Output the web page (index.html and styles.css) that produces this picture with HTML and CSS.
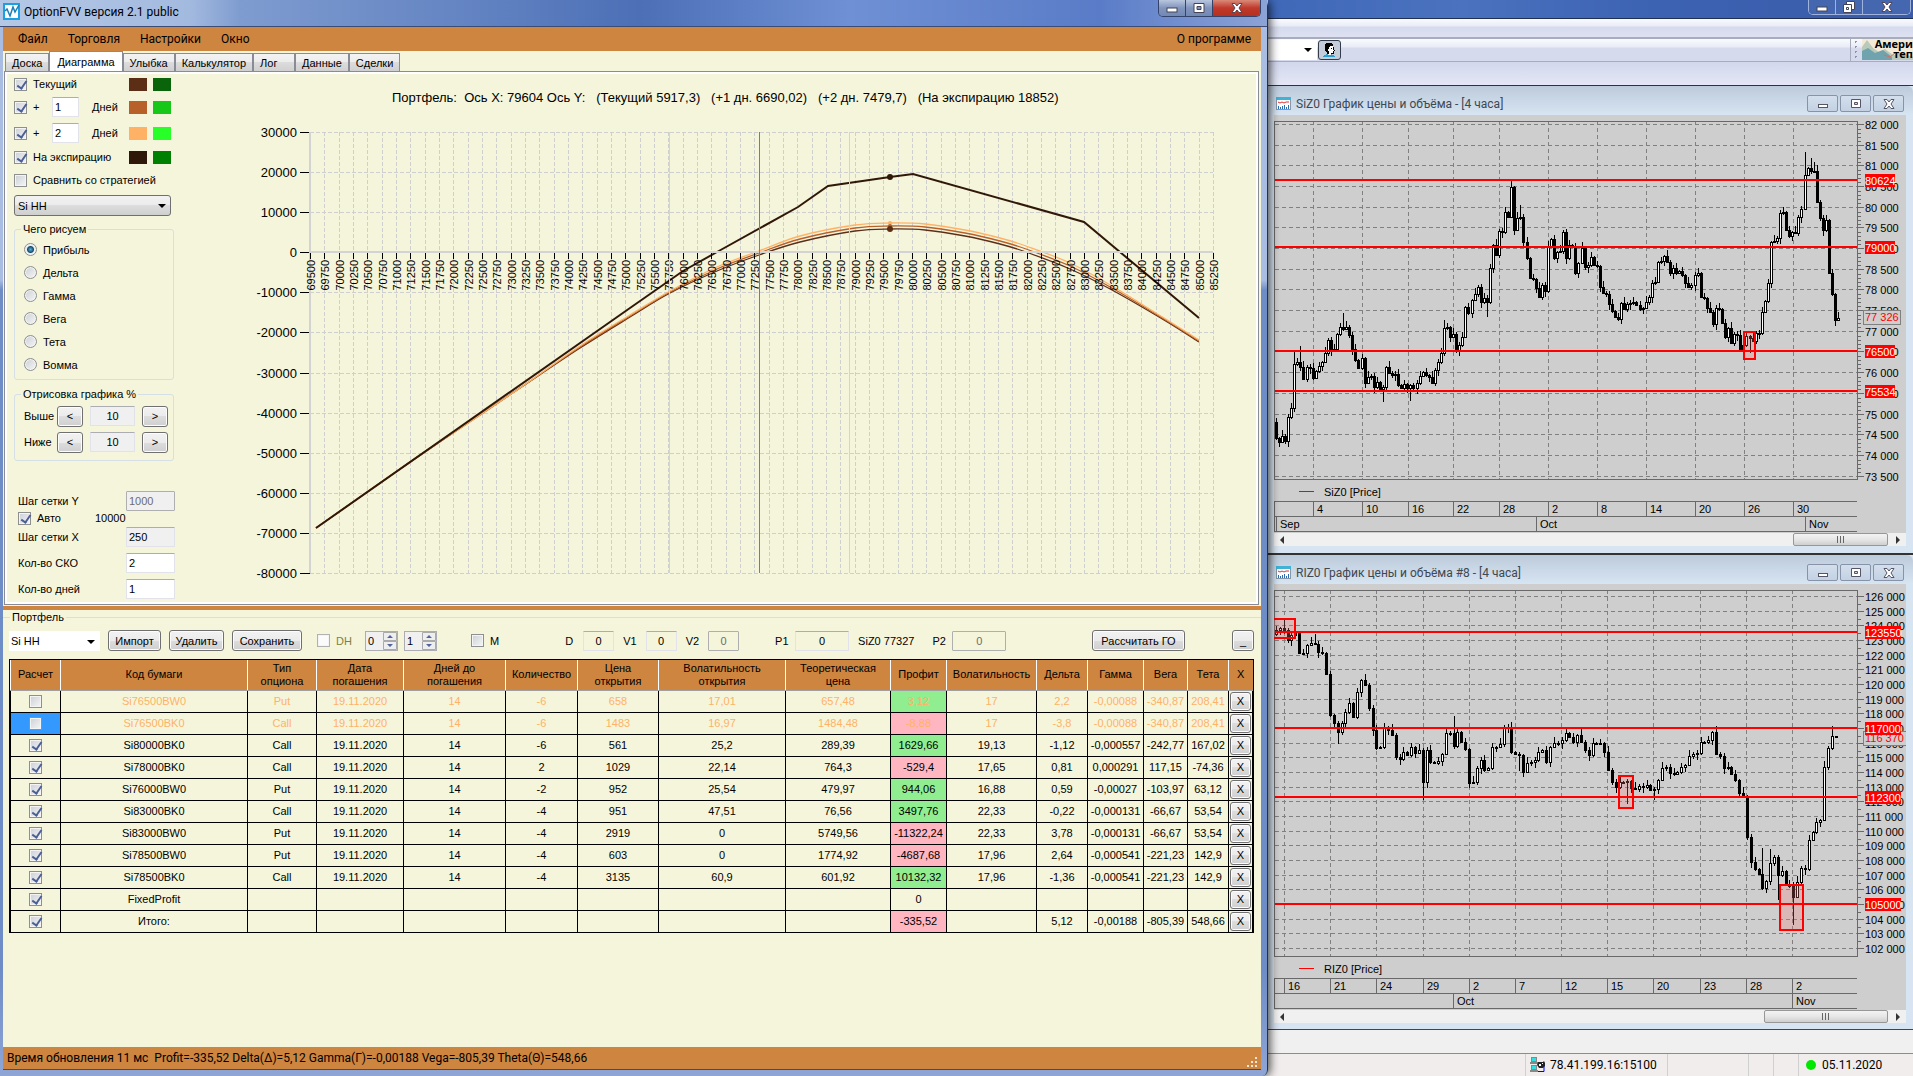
FILE: index.html
```html
<!DOCTYPE html>
<html lang="ru">
<head>
    <meta charset="UTF-8">
    <meta name="viewport" content="width=device-width, initial-scale=1.0">
    <title>OptionFVV версия 2.1 public</title>
    <link rel="stylesheet" href="styles.css">
</head>
<body>
    <main class="window">
        <header class="titlebar">
            <svg class="app-icon" width="17" height="17" viewBox="0 0 17 17">
                <rect width="17" height="17" fill="#1ba1e2"/>
                <rect x="2" y="2" width="13" height="13" fill="#fff"/>
                <path d="M2 8l2-2 3 7 3-9 2 5 4-7" fill="none" stroke="#1b7fb8" stroke-width="1.5"/>
            </svg>
            <h1>OptionFVV версия 2.1 public</h1>
            <div class="window-buttons">
                <button aria-label="Свернуть"><svg width="12" height="10" viewBox="0 0 12 10"><rect x="1" y="5" width="10" height="4" fill="#fff" stroke="#445"/></svg></button>
                <button aria-label="Развернуть"><svg width="12" height="10" viewBox="0 0 12 10"><path d="M1 .5h10v9H1zM4 3.500h4v3H4z" fill="#fff" fill-rule="evenodd" stroke="#445"/></svg></button>
                <button class="close" aria-label="Закрыть"><svg width="12" height="10" viewBox="0 0 12 10"><path d="M1 .5h3l2 2.500 2-2.500h3L8 5l3 4.500H8L6 7 4 9.500H1L4 5z" fill="#fff" stroke="#545"/></svg></button>
            </div>
        </header>

        <nav class="menu">
            <a href="#">Файл</a>
            <a href="#">Торговля</a>
            <a href="#">Настройки</a>
            <a href="#">Окно</a>
            <a href="#" class="about">О программе</a>
        </nav>

        <div class="tabs">
            <button>Доска</button>
            <button class="active">Диаграмма</button>
            <button>Улыбка</button>
            <button>Калькулятор</button>
            <button class="tab-log">Лог</button>
            <button>Данные</button>
            <button>Сделки</button>
        </div>

        <div class="client-area">
            <section class="page">
                <div class="sidebar">
                    <div class="line-row first">
                        <input type="checkbox" id="cur" checked>
                        <label for="cur" class="wide">Текущий</label>
                        <i class="swatch brown"></i><i class="swatch green"></i>
                    </div>
                    <div class="line-row">
                        <input type="checkbox" id="plus1" checked>
                        <label for="plus1">+</label>
                        <input type="text" value="1" aria-label="Дней 1">
                        <span>Дней</span>
                        <i class="swatch sienna"></i><i class="swatch lime"></i>
                    </div>
                    <div class="line-row">
                        <input type="checkbox" id="plus2" checked>
                        <label for="plus2">+</label>
                        <input type="text" value="2" aria-label="Дней 2">
                        <span>Дней</span>
                        <i class="swatch sand"></i><i class="swatch bright"></i>
                    </div>
                    <div class="line-row short">
                        <input type="checkbox" id="exp" checked>
                        <label for="exp" class="wide">На экспирацию</label>
                        <i class="swatch dark"></i><i class="swatch deep"></i>
                    </div>
                    <div class="compare-row">
                        <input type="checkbox" id="compare">
                        <label for="compare">Сравнить со стратегией</label>
                    </div>
                    <div class="select grey">
                        <select aria-label="Стратегия"><option>Si HH</option></select>
                    </div>

                    <fieldset class="draw">
                        <legend>Чего рисуем</legend>
                        <label><input type="radio" name="draw" checked>Прибыль</label>
                        <label><input type="radio" name="draw">Дельта</label>
                        <label><input type="radio" name="draw">Гамма</label>
                        <label><input type="radio" name="draw">Вега</label>
                        <label><input type="radio" name="draw">Тета</label>
                        <label><input type="radio" name="draw">Вомма</label>
                    </fieldset>

                    <fieldset class="range">
                        <legend>Отрисовка графика %</legend>
                        <div class="range-row">
                            <label for="above">Выше</label>
                            <button class="btn">&lt;</button>
                            <input type="text" id="above" value="10" readonly>
                            <button class="btn">&gt;</button>
                        </div>
                        <div class="range-row">
                            <label for="below">Ниже</label>
                            <button class="btn">&lt;</button>
                            <input type="text" id="below" value="10" readonly>
                            <button class="btn">&gt;</button>
                        </div>
                    </fieldset>

                    <div class="steps">
                        <div class="step-row"><label for="stepY">Шаг сетки Y</label><input type="text" id="stepY" value="1000" disabled></div>
                        <div class="auto-row"><input type="checkbox" id="auto" checked><label for="auto">Авто</label><span>10000</span></div>
                        <div class="step-row"><label for="stepX">Шаг сетки X</label><input type="text" id="stepX" value="250" readonly></div>
                        <div class="step-row"><label for="sko">Кол-во СКО</label><input type="text" id="sko" value="2"></div>
                        <div class="step-row"><label for="days">Кол-во дней</label><input type="text" id="days" value="1"></div>
                    </div>
                </div>
                <svg class="profit-chart" id="profitChart" viewBox="180 74 1076 528"></svg>
            </section>

            <div class="splitter"></div>

            <fieldset class="portfolio">
                <legend>Портфель</legend>
                <div class="toolbar">
                    <div class="select white"><select aria-label="Портфель"><option>Si HH</option></select></div>
                    <button class="btn import">Импорт</button>
                    <button class="btn remove">Удалить</button>
                    <button class="btn save">Сохранить</button>
                    <div class="hedge">
                        <input type="checkbox" id="dh" disabled>
                        <label for="dh">DH</label>
                        <div class="spin">
                            <input type="text" value="0" aria-label="DH от">
                            <svg width="14" height="18" viewBox="0 0 14 18"><path d="M.5.500h13v8H.5zM.5 9.500h13v8H.5z" fill="#eee" stroke="#aaa"/><path d="M4 6l3-3 3 3zM4 12l3 3 3-3z" fill="#5264a0"/></svg>
                        </div>
                        <div class="spin">
                            <input type="text" value="1" aria-label="DH до">
                            <svg width="14" height="18" viewBox="0 0 14 18"><path d="M.5.500h13v8H.5zM.5 9.500h13v8H.5z" fill="#eee" stroke="#aaa"/><path d="M4 6l3-3 3 3zM4 12l3 3 3-3z" fill="#5264a0"/></svg>
                        </div>
                    </div>
                    <div class="manual">
                        <input type="checkbox" id="m">
                        <label for="m">M</label>
                    </div>
                    <div class="params">
                        <label for="pd">D</label><input type="text" id="pd" value="0">
                        <label for="v1">V1</label><input type="text" id="v1" value="0">
                        <label for="v2">V2</label><input type="text" id="v2" value="0" disabled>
                    </div>
                    <div class="params prices">
                        <label for="p1">P1</label><input type="text" id="p1" value="0">
                        <span>SiZ0 77327</span>
                        <label for="p2">P2</label><input type="text" id="p2" value="0" disabled>
                    </div>
                    <button class="btn margin">Рассчитать ГО</button>
                    <button class="btn fold">_</button>
                </div>
                <div class="grid-box">
                    <table class="positions">
                        <colgroup>
                            <col class="c-use"><col class="c-code"><col class="c-type"><col class="c-date"><col class="c-days">
                            <col class="c-qty"><col class="c-open"><col class="c-vopen"><col class="c-theor"><col class="c-profit">
                            <col class="c-vol"><col class="c-delta"><col class="c-gamma"><col class="c-vega"><col class="c-theta"><col class="c-x">
                        </colgroup>
                        <thead>
                            <tr>
                                <th>Расчет</th>
                                <th>Код бумаги</th>
                                <th>Тип<br>опциона</th>
                                <th>Дата<br>погашения</th>
                                <th>Дней до<br>погашения</th>
                                <th>Количество</th>
                                <th>Цена<br>открытия</th>
                                <th>Волатильность<br>открытия</th>
                                <th>Теоретическая<br>цена</th>
                                <th>Профит</th>
                                <th>Волатильность</th>
                                <th>Дельта</th>
                                <th>Гамма</th>
                                <th>Вега</th>
                                <th>Тета</th>
                                <th>X</th>
                            </tr>
                        </thead>
                        <tbody id="positions"></tbody>
                    </table>
                </div>
            </fieldset>
        </div>

        <footer class="status">
            <span>Время обновления 11 мс&nbsp; Profit=-335,52 Delta(Δ)=5,12 Gamma(Γ)=-0,00188 Vega=-805,39 Theta(Θ)=548,66</span>
            <svg width="12" height="12" viewBox="0 0 12 12"><path d="M8 0h2v2H8zM4 4h2v2H4zM8 4h2v2H8zM0 8h2v2H0zM4 8h2v2H4zM8 8h2v2H8z" fill="#f4e6d4"/></svg>
        </footer>
    </main>

    <aside class="quik">
        <div class="quik-title">
            <div class="window-buttons">
                <button aria-label="Свернуть"><svg width="12" height="10" viewBox="0 0 12 10"><rect x="1" y="5" width="10" height="4" fill="#fff" stroke="#445"/></svg></button>
                <button aria-label="Восстановить"><svg width="12" height="12" viewBox="0 0 12 12"><path d="M3.500.500h8v8h-8z" fill="#fff" stroke="#445"/><path d="M.5 3.500h8v8h-8zM3.500 6.500h2v2h-2z" fill="#fff" fill-rule="evenodd" stroke="#445"/></svg></button>
                <button class="wide" aria-label="Закрыть"><svg width="12" height="10" viewBox="0 0 12 10"><path d="M1 .5h3l2 2.500 2-2.500h3L8 5l3 4.500H8L6 7 4 9.500H1L4 5z" fill="#fff" stroke="#545"/></svg></button>
            </div>
        </div>
        <div class="quik-menu"></div>
        <div class="quik-toolbar">
            <div class="combo"><select aria-label="Клиент"><option></option></select></div>
            <button class="client" aria-label="Клиент">
                <svg width="13" height="14" viewBox="0 0 13 14">
                    <path d="M5 2h5v2h1v3h1v1h-1v3H8v2H5V9H4V6h1z" fill="#fff"/>
                    <path d="M10 4h1v3h1v1h-1v3H8v-1h2V8h1V7h-1zM8 5h1v1H8z" fill="#000"/>
                    <path d="M3 0h6v1h1v2H7v1H6v2H5v2h1v3H5v1H4V9H3V8H2V5h0V1h1z" fill="#000"/>
                    <path d="M3 11h2v1h3v-1h1v1h2v1h1v1H0v-1h1v-1h2z" fill="#2f9fd0"/>
                </svg>
            </button>
            <div class="banner">
                <svg viewBox="0 0 52 21" width="52" height="21">
                    <rect width="52" height="21" fill="#f3ead8"/>
                    <path d="M0 8l5-7 6 8 6 4 6-3 8 6 8-2 13 4v3H0z" fill="#b9c9ba"/>
                    <path d="M0 12l6-3 7 5 8-3 9 7v3H0z" fill="#6fa3ae"/>
                    <path d="M22 16l6 2 5-4" fill="none" stroke="#c8766a"/>
                </svg>
                <div class="banner-text"><span>Амери</span><span>теп</span></div>
            </div>
        </div>
        <div class="quik-gap"></div>

        <section class="child">
            <header>
                <svg width="15" height="13" viewBox="0 0 15 13"><rect x=".5" y=".5" width="14" height="12" fill="#fff" stroke="#8a98a6"/><rect width="15" height="3" fill="#3fb2d6"/><path d="M2 5l2 1 2-1 2 1 2-1 3 0" fill="none" stroke="#d33"/><path d="M2.500 12V9M4.500 12v-2M6.500 12V9M8.500 12V8M10.500 12v-2M12.500 12V8" stroke="#2a6fb5"/></svg>
                <h2>SiZ0 График цены и объёма - [4 часа]</h2>
                <div class="child-buttons">
                    <button aria-label="Свернуть"><svg width="12" height="10" viewBox="0 0 12 10"><rect x="1.500" y="5.500" width="9" height="3" fill="#fff" stroke="#556"/></svg></button>
                    <button aria-label="Развернуть"><svg width="12" height="10" viewBox="0 0 12 10"><path d="M1.500.500h9v8h-9zM4.500 3.500h3v2h-3z" fill="#fff" fill-rule="evenodd" stroke="#556"/></svg></button>
                    <button aria-label="Закрыть"><svg width="12" height="10" viewBox="0 0 12 10"><path d="M1 .5h3l2 2.500 2-2.500h3L8 5l3 4.500H8L6 7 4 9.500H1L4 5z" fill="#fff" stroke="#556"/></svg></button>
                </div>
            </header>
            <svg class="price-chart" id="siChart" viewBox="0 0 632 418"></svg>
            <div class="scroll"><i class="left"></i><b></b><i class="right"></i></div>
        </section>

        <section class="child second">
            <header>
                <svg width="15" height="13" viewBox="0 0 15 13"><rect x=".5" y=".5" width="14" height="12" fill="#fff" stroke="#8a98a6"/><rect width="15" height="3" fill="#3fb2d6"/><path d="M2 5l2 1 2-1 2 1 2-1 3 0" fill="none" stroke="#d33"/><path d="M2.500 12V9M4.500 12v-2M6.500 12V9M8.500 12V8M10.500 12v-2M12.500 12V8" stroke="#2a6fb5"/></svg>
                <h2>RIZ0 График цены и объёма #8 - [4 часа]</h2>
                <div class="child-buttons">
                    <button aria-label="Свернуть"><svg width="12" height="10" viewBox="0 0 12 10"><rect x="1.500" y="5.500" width="9" height="3" fill="#fff" stroke="#556"/></svg></button>
                    <button aria-label="Развернуть"><svg width="12" height="10" viewBox="0 0 12 10"><path d="M1.500.500h9v8h-9zM4.500 3.500h3v2h-3z" fill="#fff" fill-rule="evenodd" stroke="#556"/></svg></button>
                    <button aria-label="Закрыть"><svg width="12" height="10" viewBox="0 0 12 10"><path d="M1 .5h3l2 2.500 2-2.500h3L8 5l3 4.500H8L6 7 4 9.500H1L4 5z" fill="#fff" stroke="#556"/></svg></button>
                </div>
            </header>
            <svg class="price-chart" id="riChart" viewBox="0 0 632 426"></svg>
            <div class="scroll long"><i class="left"></i><b></b><i class="right"></i></div>
        </section>

        <div class="quik-tabs"></div>
        <footer class="quik-status">
            <span class="server">
                <svg width="16" height="16" viewBox="0 0 16 16"><path d="M1 0h6v5H1zM0 5h8v2H0zM1 8h6v5H1zM0 13h8v2H0z" fill="#888"/><path d="M2 1h4v3H2zM2 9h4v3H2z" fill="#2fe0e0"/><path d="M8 14.500h6V9" fill="none" stroke="#00f"/><path d="M8 5h5l1-1 1 2v3l-2 2H9L7 8z" fill="#222"/><path d="M9 7h2v2H9zM12 6h1v1h-1z" fill="#fff"/></svg>
                78.41.199.16:15100
            </span>
            <span class="cell"></span>
            <span class="cell small"></span>
            <span class="cell small"></span>
            <span class="date"><i></i>05.11.2020</span>
        </footer>
    </aside>

    <script src="script.js"></script>
</body>
</html>
```
FILE: styles.css
```css
* {
    margin: 0;
    padding: 0;
    box-sizing: border-box;
}

body {
    font-family: 'Liberation Sans', Arial, sans-serif;
    font-size: 11px;
    line-height: 14px;
    color: #000;
    min-height: 100vh;
    display: grid;
    grid-template-columns: minmax(0, 1268fr) minmax(0, 645fr);
    background: #f0f0f0;
}

button,
input,
select {
    font: inherit;
    color: inherit;
}

button {
    cursor: pointer;
}

a {
    color: inherit;
    text-decoration: none;
}

svg {
    display: block;
}

/* Main window */
.window {
    position: relative;
    z-index: 2;
    display: flex;
    flex-direction: column;
    min-height: 100vh;
    padding: 0 6px 6px 3px;
    background: linear-gradient(180deg, #a9bde2 0, #a9bde2 280px, #6e8cc6 290px, #6e8cc6 90%, #8ea5d6 100%);
    border-right: 1px solid #26324a;
    border-radius: 0 6px 6px 0;
    box-shadow: 2px 0 10px rgba(0, 0, 0, 0.7);
}

.titlebar {
    display: flex;
    align-items: center;
    height: 27px;
    margin: 0 -6px 0 -3px;
    padding: 0 6px 3px 3px;
    background: linear-gradient(90deg, #b4c8e6 0, #a3badf 190px, #7f9cd0 240px, #5f80c0 500px, #4c6fb6 640px, #6f90d4 850px, #5a7cc8 1100px, #8ca3d6 100%);
    border-bottom: 1px solid #3c4c74;
}

.app-icon {
    margin-right: 4px;
}

.titlebar h1 {
    font: 12px/16px Roboto, sans-serif;
    flex: 1;
}

.window-buttons {
    display: flex;
    align-self: flex-start;
    border: 1px solid #33436b;
    border-top: 0;
    border-radius: 0 0 5px 5px;
    overflow: hidden;
}

.window-buttons button {
    display: flex;
    align-items: center;
    justify-content: center;
    width: 27px;
    height: 16px;
    border: 0;
    border-right: 1px solid #33436b;
    background: linear-gradient(#b9c6de, #8194bd 50%, #7289b5);
}

.window-buttons .close {
    width: 47px;
    border-right: 0;
    background: linear-gradient(#d98a78, #c0392b 50%, #b5301f);
}

.menu {
    display: flex;
    align-items: center;
    gap: 20px;
    height: 24px;
    padding: 0 10px 0 15px;
    background: #cd853f;
    font: 12px/16px Roboto, sans-serif;
}

.menu .about {
    margin-left: auto;
}

.tabs {
    display: flex;
    align-items: flex-end;
    height: 20px;
    padding-left: 2px;
    background: #f5f5dc;
}

.tabs button {
    height: 18px;
    padding: 0 6px;
    border: 1px solid #898c95;
    border-bottom: 0;
    background: linear-gradient(#f3f3f3, #ececec 50%, #dcdcdc 50%, #d0d0d0);
}

.tabs .active {
    height: 20px;
    padding: 0 7px;
    background: #fff;
}

.tabs .tab-log {
    width: 42px;
    text-align: left;
}

.client-area {
    flex: 1;
    display: flex;
    flex-direction: column;
    background: #f5f5dc;
}

.page {
    display: flex;
    border: 1px solid #898c95;
    margin: 0 2px 0 1px;
    box-shadow: inset 0 0 0 2px #fff;
    padding: 2px;
}

.sidebar {
    flex: 0 0 173px;
    padding-left: 7px;
}

.profit-chart {
    flex: 1;
    min-width: 0;
}

/* Controls */
input[type="checkbox"],
input[type="radio"] {
    appearance: none;
    flex: none;
    width: 13px;
    height: 13px;
    border: 1px solid #8e8f8f;
    background: linear-gradient(135deg, #cbcfd5, #f6f6f6);
    box-shadow: inset 0 0 0 1px #f4f4f4;
}

input[type="checkbox"]:checked::after {
    content: '';
    display: block;
    width: 4px;
    height: 8px;
    margin: 0 0 0 4px;
    border: solid #4b5f97;
    border-width: 0 2px 2px 0;
    transform: rotate(35deg);
}

input[type="checkbox"]:disabled {
    border-color: #b1b1b1;
    background: #fbfbfb;
}

input[type="radio"] {
    border-radius: 50%;
}

input[type="radio"]:checked {
    background: radial-gradient(circle, #4fb5dc 0, #1b4a6b 3px, #e8eef2 4px);
}

input[type="text"] {
    width: 100%;
    height: 20px;
    padding: 0 2px;
    border: 1px solid #e2e3ea;
    border-top-color: #abadb3;
    border-radius: 1px;
    background: #fff;
}

input[type="text"]:read-only {
    background: #f0f0f0;
}

input[type="text"]:disabled {
    border-color: #afafaf;
    background: #f0f0f0;
    color: #6d6d6d;
}

.btn {
    height: 21px;
    border: 1px solid #707070;
    border-radius: 3px;
    background: linear-gradient(#f2f2f2, #ebebeb 50%, #ddd 50%, #cfcfcf);
    box-shadow: inset 0 0 0 1px #fcfcfc;
}

.select {
    position: relative;
}

.select select {
    appearance: none;
    display: block;
    width: 100%;
    height: 21px;
    padding: 0 3px;
    border: 1px solid #707070;
    border-radius: 3px;
    background: linear-gradient(#f2f2f2, #ebebeb 50%, #ddd 50%, #cfcfcf);
}

.select::after,
.combo::after {
    content: '';
    position: absolute;
    right: 5px;
    top: 9px;
    border: 4px solid transparent;
    border-top-color: #000;
    border-bottom: 0;
}

.select.white select {
    height: 20px;
    padding: 0 1px;
    border-color: #fff;
    border-radius: 0;
    background: #fff;
}

/* Chart settings */
.line-row {
    display: grid;
    grid-template-columns: 19px 19px 40px 37px 24px 18px;
    align-items: center;
    height: 26px;
}

.line-row.first {
    height: 20px;
}

.line-row.short {
    height: 22px;
}

.line-row .wide {
    grid-column: 2 / 5;
}

.line-row input[type="text"] {
    width: 27px;
}

.swatch {
    width: 18px;
    height: 13px;
}

.brown { background: #5c2e16; }
.green { background: #0a640a; }
.sienna { background: #b8602a; }
.lime { background: #18c818; }
.sand { background: #ffb266; }
.bright { background: #28ff28; }
.dark { background: #301808; }
.deep { background: #008000; }

.compare-row {
    display: flex;
    align-items: center;
    gap: 6px;
    height: 24px;
    margin-bottom: 3px;
}

.sidebar .select {
    width: 157px;
}

fieldset {
    border: 1px solid #d5dfe5;
    border-radius: 3px;
}

legend {
    margin-left: 6px;
    padding: 0 2px;
}

.draw {
    width: 160px;
    margin-top: 6px;
    padding: 2px 0 3px;
}

.draw label {
    display: flex;
    align-items: center;
    gap: 6px;
    height: 23px;
    padding-left: 9px;
}

.range {
    width: 160px;
    margin-top: 7px;
    padding: 2px 0 5px;
}

.range-row {
    display: grid;
    grid-template-columns: 26px 26px 45px 26px;
    gap: 7px;
    align-items: center;
    height: 26px;
    padding-left: 9px;
}

.range-row input[type="text"] {
    text-align: center;
}

.steps {
    margin-top: 27px;
    padding-left: 4px;
}

.step-row {
    display: grid;
    grid-template-columns: 108px 49px;
    align-items: center;
    height: 26px;
}

.auto-row {
    display: flex;
    align-items: center;
    gap: 6px;
    height: 14px;
    margin: -3px 0 -1px;
}

.auto-row span {
    margin-left: 28px;
}

.splitter {
    height: 5px;
    border-top: 1px solid #f5f5dc;
    background: #cd853f;
}

/* Portfolio */
.portfolio {
    flex: 1;
    display: flex;
    flex-direction: column;
    min-width: 0;
    border-width: 1px 0 0;
    border-radius: 0;
    padding: 5px 7px 0 6px;
}

.portfolio legend {
    margin-left: 1px;
}

.toolbar {
    display: flex;
    align-items: center;
    gap: 8px;
    height: 23px;
    margin-bottom: 7px;
}

.toolbar .white {
    width: 91px;
}

.import { width: 53px; }
.remove { width: 55px; }
.save { width: 70px; }

.hedge,
.manual,
.params {
    display: flex;
    align-items: center;
    gap: 6px;
}

.hedge {
    margin-left: 7px;
    color: #808040;
}

.hedge label {
    width: 23px;
}

.spin {
    display: flex;
    width: 33px;
    height: 20px;
    border: 1px solid #abadb3;
    background: #f0f0f0;
    color: #000;
}

.spin input[type="text"] {
    height: 18px;
    border: 0;
    background: #f0f0f0;
}

.spin svg {
    flex: none;
}

.manual {
    margin-left: 26px;
}

.params {
    gap: 9px;
    margin-left: 58px;
}

.params input[type="text"] {
    width: 31px;
    text-align: center;
    background: #f5f5dc;
}

.params label {
    min-width: 9px;
}

.prices {
    gap: 6px;
    margin-left: 28px;
}

.prices input[type="text"] {
    width: 54px;
}

.prices span {
    margin: 0 12px 0 3px;
}

.prices label {
    min-width: 14px;
}

.margin {
    width: 93px;
    margin-left: auto;
}

.fold {
    width: 22px;
    margin-left: 39px;
}

.grid-box {
    flex: 1;
    border: 1px solid #000;
    border-bottom: 0;
}

.positions {
    width: 100%;
    table-layout: fixed;
    border-collapse: collapse;
}

.c-use { width: 50px; }
.c-code { width: auto; }
.c-type { width: 69px; }
.c-date { width: 87px; }
.c-days { width: 102px; }
.c-qty { width: 72px; }
.c-open { width: 81px; }
.c-vopen { width: 127px; }
.c-theor { width: 105px; }
.c-profit { width: 56px; }
.c-vol { width: 90px; }
.c-delta { width: 51px; }
.c-gamma { width: 56px; }
.c-vega { width: 44px; }
.c-theta { width: 41px; }
.c-x { width: 24px; }

.positions th {
    height: 30px;
    background: #cd853f;
    border-left: 1px solid #fff;
    border-bottom: 1px solid #a0a0a0;
    font-weight: normal;
    line-height: 13px;
}

.positions td {
    height: 22px;
    border: 1px solid #000;
    text-align: center;
    white-space: nowrap;
}

.positions td input {
    display: block;
    margin: 0 auto;
}

.positions td .btn {
    display: block;
    width: 21px;
    height: 19px;
    margin: 0 auto;
}

.positions .off td {
    color: #ffb266;
}

.positions .off .btn {
    color: #000;
}

.positions .selected {
    background: #3399ff;
}

.positions .gain {
    background: #90ee90;
}

.positions .loss {
    background: #ffb6c1;
}

.status {
    display: flex;
    align-items: center;
    justify-content: space-between;
    height: 23px;
    padding: 0 2px 0 4px;
    background: #cd853f;
    border-bottom: 1px solid #3c4c74;
    font: 12px/16px Roboto, sans-serif;
}

.status svg {
    align-self: flex-end;
}

/* Trading terminal behind */
.quik {
    display: flex;
    flex-direction: column;
    min-height: 100vh;
    overflow: hidden;
}

.quik-title {
    display: flex;
    justify-content: flex-end;
    height: 19px;
    padding-right: 2px;
    background: linear-gradient(90deg, #3f68b8, #4a72be 30%, #3c62b2 60%, #3a5ca8);
    border-bottom: 1px solid #1f2f55;
}

.quik-title .window-buttons {
    height: 15px;
    border-color: #9fb3dc;
}

.quik-title .window-buttons button {
    height: 14px;
    border-color: #9fb3dc;
    background: #4567b0;
}

.quik-title .window-buttons .wide {
    width: 47px;
    border-right: 0;
}

.quik-menu {
    height: 20px;
    border-bottom: 2px solid #a8adbd;
    background: linear-gradient(#fafbfe, #e9ecf7 7px, #d5daed 8px, #dde1f2);
}

.quik-toolbar {
    display: flex;
    align-items: center;
    height: 23px;
    border-bottom: 1px solid #a8adbd;
    background: linear-gradient(#fafbfe, #e9ecf7 8px, #d5daed 9px, #d5daed);
}

.combo {
    position: relative;
    width: 49px;
}

.combo::after {
    top: 8px;
}

.combo select {
    appearance: none;
    display: block;
    width: 100%;
    height: 20px;
    border: 0;
    background: #fff;
}

.client {
    display: flex;
    align-items: center;
    justify-content: center;
    width: 23px;
    height: 20px;
    margin-left: 1px;
    border: 1px solid #333b4c;
    border-radius: 3px;
    background: #c5cddb;
}

.banner {
    display: flex;
    position: relative;
    width: 63px;
    height: 22px;
    margin-left: auto;
    padding-left: 11px;
    border-left: 1px solid #a8adbd;
    background: radial-gradient(circle, #8a93ad 1px, transparent 1px) 2px 0 / 5px 5px repeat-y;
    overflow: hidden;
}

.banner svg {
    flex: none;
}

.banner-text {
    position: absolute;
    right: 0;
    top: 0;
    font: bold 11px/10px 'Open Sans', sans-serif;
    text-align: right;
}

.banner-text span {
    display: block;
}

.quik-gap {
    height: 23px;
    background: linear-gradient(#d2d7ec, #e3e7f6);
}

.child {
    padding: 0 7px 7px 6px;
    border-top: 1px solid #333;
    background: #d7e4f2;
}

.child.second {
    padding-bottom: 6px;
    border-top-width: 2px;
    border-bottom: 1px solid #444;
}

.child header {
    display: flex;
    align-items: center;
    gap: 5px;
    height: 29px;
    margin: 0 -7px 0 -6px;
    padding: 6px 9px 0 8px;
    background: linear-gradient(#bccbdb, #d7e4f2);
    border-radius: 0 6px 0 0;
}

.child h2 {
    flex: 1;
    font: 12px/16px Roboto, sans-serif;
    color: #404850;
    white-space: nowrap;
}

.child-buttons {
    display: flex;
    gap: 2px;
}

.child-buttons button {
    display: flex;
    align-items: center;
    justify-content: center;
    width: 31px;
    height: 17px;
    border: 1px solid #8793a8;
    border-radius: 2px;
    background: linear-gradient(#d3dfec, #c3d1e3);
}

.price-chart {
    width: 100%;
    background: #cecece;
}

.scroll {
    display: flex;
    align-items: center;
    height: 13px;
    padding: 0 6px;
    background: #f0f0f0;
}

.scroll i {
    border: 4px solid transparent;
}

.scroll .left {
    border-left-width: 0;
    border-right-color: #333;
}

.scroll .right {
    border-right-width: 0;
    border-left-color: #333;
}

.scroll b {
    display: flex;
    align-items: center;
    justify-content: center;
    width: 95px;
    height: 13px;
    margin: 0 8px 0 auto;
    border: 1px solid #979797;
    border-radius: 2px;
    background: linear-gradient(#f3f3f3, #e6e6e6 50%, #cfcfcf);
}

.scroll b::after {
    content: '';
    width: 8px;
    height: 7px;
    background: repeating-linear-gradient(90deg, #666 0 1px, transparent 1px 3px);
}

.scroll.long b {
    width: 124px;
}

.quik-tabs {
    flex: 1;
    border-bottom: 1px solid #8c8c8c;
    background: #f0f0f0;
}

.quik-status {
    display: flex;
    height: 22px;
    padding-left: 257px;
    background: #f1edec;
    font: 12px/22px Roboto, sans-serif;
}

.quik-status span {
    display: flex;
    align-items: center;
    border-left: 1px solid #d0d0d0;
}

.quik-status .server {
    gap: 4px;
    width: 142px;
    padding-left: 4px;
}

.quik-status .cell {
    width: 81px;
}

.quik-status .small {
    width: 25px;
}

.quik-status .date {
    gap: 6px;
    flex: 1;
    padding-left: 7px;
}

.date i {
    width: 10px;
    height: 10px;
    border-radius: 50%;
    background: #00e800;
}

/* Charts */
.grid-line {
    stroke: #cfcfcf;
    stroke-dasharray: 4 2;
    shape-rendering: crispEdges;
}

.axis {
    stroke: #d3d3d3;
    stroke-width: 2;
}

.tick,
.marker {
    stroke: #000;
    shape-rendering: crispEdges;
}

.marker.sigma {
    stroke: #ffc0cb;
}

.marker.price {
    stroke: #708090;
}

.chart-title,
.label-y {
    font-size: 13px;
}

.chart-title {
    white-space: pre;
}

.label-y {
    text-anchor: end;
}

.label-x {
    font-size: 11px;
    text-anchor: end;
}

.curve {
    fill: none;
}

.price-grid {
    stroke: #808080;
    stroke-dasharray: 4 3;
    shape-rendering: crispEdges;
}

.frame {
    fill: none;
    stroke: #696969;
    shape-rendering: crispEdges;
}

.level {
    stroke: #f00;
    stroke-width: 2;
    shape-rendering: crispEdges;
}

.level-text {
    fill: #fff;
}

.zone {
    fill: rgba(255, 120, 120, 0.25);
    stroke: #f00;
    stroke-width: 2;
}

.last-box {
    fill: #cecece;
    stroke: #808080;
}

.last-text {
    fill: #f00;
}

.candle {
    stroke: #000;
    shape-rendering: crispEdges;
}
```
FILE: script.js
```js
const NS = 'http://www.w3.org/2000/svg';

function add(parent, name, attrs, text) {
    const el = document.createElementNS(NS, name);
    for (const key in attrs) el.setAttribute(key, attrs[key]);
    if (text !== undefined) el.textContent = text;
    parent.appendChild(el);
    return el;
}

function line(parent, cls, x1, y1, x2, y2) {
    return add(parent, 'line', { class: cls, x1, y1, x2, y2 });
}

// Positions table
const rows = [
    [0, 'Si76500BW0', 'Put', '19.11.2020', '14', '-6', '658', '17,01', '657,48', '3,12', '17', '2,2', '-0,00088', '-340,87', '208,41'],
    [0, 'Si76500BK0', 'Call', '19.11.2020', '14', '-6', '1483', '16,97', '1484,48', '-8,88', '17', '-3,8', '-0,00088', '-340,87', '208,41'],
    [1, 'Si80000BK0', 'Call', '19.11.2020', '14', '-6', '561', '25,2', '289,39', '1629,66', '19,13', '-1,12', '-0,000557', '-242,77', '167,02'],
    [1, 'Si78000BK0', 'Call', '19.11.2020', '14', '2', '1029', '22,14', '764,3', '-529,4', '17,65', '0,81', '0,000291', '117,15', '-74,36'],
    [1, 'Si76000BW0', 'Put', '19.11.2020', '14', '-2', '952', '25,54', '479,97', '944,06', '16,88', '0,59', '-0,00027', '-103,97', '63,12'],
    [1, 'Si83000BK0', 'Call', '19.11.2020', '14', '-4', '951', '47,51', '76,56', '3497,76', '22,33', '-0,22', '-0,000131', '-66,67', '53,54'],
    [1, 'Si83000BW0', 'Put', '19.11.2020', '14', '-4', '2919', '0', '5749,56', '-11322,24', '22,33', '3,78', '-0,000131', '-66,67', '53,54'],
    [1, 'Si78500BW0', 'Put', '19.11.2020', '14', '-4', '603', '0', '1774,92', '-4687,68', '17,96', '2,64', '-0,000541', '-221,23', '142,9'],
    [1, 'Si78500BK0', 'Call', '19.11.2020', '14', '-4', '3135', '60,9', '601,92', '10132,32', '17,96', '-1,36', '-0,000541', '-221,23', '142,9'],
    [1, 'FixedProfit', '', '', '', '', '', '', '', '0', '', '', '', '', ''],
    [1, 'Итого:', '', '', '', '', '', '', '', '-335,52', '', '5,12', '-0,00188', '-805,39', '548,66']
];

document.getElementById('positions').innerHTML = rows.map((row, i) => {
    const cells = row.map((value, col) => {
        if (col === 0) {
            return `<td class="${i === 1 ? 'selected' : ''}"><input type="checkbox" aria-label="Расчет ${row[1]}" ${value ? 'checked' : ''}></td>`;
        }
        let cls = '';
        if (col === 9 && value !== '0') cls = value[0] === '-' ? 'loss' : 'gain';
        return `<td class="${cls}">${value}</td>`;
    }).join('');
    return `<tr class="${row[0] ? '' : 'off'}">${cells}<td><button class="btn">X</button></td></tr>`;
}).join('');

// Profit chart
const profit = document.getElementById('profitChart');
const left = 310, right = 1213, top0 = 132, bottom = 573;
const stepX = (right - left) / 63, stepY = (bottom - top0) / 11;

add(profit, 'text', { class: 'chart-title', x: 392, y: 102 },
    'Портфель:  Ось X: 79604 Ось Y:   (Текущий 5917,3)   (+1 дн. 6690,02)   (+2 дн. 7479,7)   (На экспирацию 18852)');

for (let i = 0; i <= 11; i++) {
    const y = Math.round(top0 + i * stepY) + 0.5;
    line(profit, 'grid-line', left, y, right, y);
    line(profit, 'tick', 300, y, left, y);
    add(profit, 'text', { class: 'label-y', x: 297, y: y + 4 }, 30000 - i * 10000);
}
for (let i = 0; i <= 63; i++) {
    const x = Math.round(left + i * stepX) + 0.5;
    line(profit, 'grid-line', x, top0, x, bottom);
}
line(profit, 'axis', left, top0, left, bottom);

const curve = [[316, 528, 0], [400, 469, 0], [450, 435, 0], [520, 388, 0], [580, 348, 1], [630, 317, 1], [670, 293, 1],
    [717, 271, 2], [759, 255, 2], [800, 242, 3], [855, 231, 3], [890, 229, 3], [925, 230, 3], [965, 236, 3],
    [1000, 244, 3], [1026, 252, 3], [1070, 269, 3], [1112, 290, 2], [1164, 320, 1], [1199, 342, 1]];

function smooth(points) {
    let d = `M${points[0]}`;
    for (let i = 0; i < points.length - 1; i++) {
        const p0 = points[i - 1] || points[i], p1 = points[i], p2 = points[i + 1], p3 = points[i + 2] || p2;
        d += `C${p1[0] + (p2[0] - p0[0]) / 6},${p1[1] + (p2[1] - p0[1]) / 6} ${p2[0] - (p3[0] - p1[0]) / 6},${p2[1] - (p3[1] - p1[1]) / 6} ${p2}`;
    }
    return d;
}

['#5c2e16', '#b8602a', '#ffb266'].forEach((color, n) => {
    const pts = curve.map(p => [p[0], p[1] - p[2] * n]);
    add(profit, 'path', { class: 'curve', d: smooth(pts), stroke: color, 'stroke-width': 1.3 });
});
add(profit, 'path', { class: 'curve', stroke: '#301808', 'stroke-width': 2,
    d: 'M316 528L630 308L683 271L717 252L798 207L828 186L890 177L913 174L1084 222L1199 318' });

line(profit, 'axis', left, 252, right, 252);
for (let i = 0; i <= 63; i++) {
    const x = Math.round(left + i * stepX) + 0.5;
    line(profit, 'tick', x, 253, x, 259);
    add(profit, 'text', { class: 'label-x', transform: `translate(${x + 4} 260) rotate(-90)` }, 69500 + i * 250);
}
line(profit, 'marker sigma', 669.5, top0, 669.5, bottom);
line(profit, 'marker sigma', 849.5, top0, 849.5, bottom);
line(profit, 'marker price', 759.5, top0, 759.5, bottom);
[[223, 2, '#ffb266'], [226, 2, '#b8602a'], [229, 3, '#5c2e16'], [177, 3, '#301808']].forEach(([cy, r, fill]) => {
    add(profit, 'circle', { cx: 890, cy, r, fill });
});

// Price charts: closes are given in chart rows, wicks go by candle index
const wicks = [[4, 2], [1, 5], [6, 1], [2, 3], [3, 6], [5, 2], [1, 1]];

function priceChart(id, o) {
    const svg = document.getElementById(id);
    const r = 584;
    o.prices.forEach((p, i) => {
        const y = Math.round(o.first + i * o.rowStep) + 0.5;
        line(svg, 'price-grid', 1, y, r, y);
        line(svg, 'frame', r, y, r + 6, y);
        for (let k = 1; k < o.minor && i < o.prices.length - 1; k++) {
            const ym = Math.round(y + k * o.rowStep / o.minor) + 0.5;
            line(svg, 'frame', r, ym, r + 3, ym);
        }
        add(svg, 'text', { x: 591, y: y + 4 }, p);
    });
    o.days.forEach(([x, text]) => {
        line(svg, 'price-grid', x + 0.5, o.top, x + 0.5, o.bottom);
        line(svg, 'frame', x + 0.5, o.dates, x + 0.5, o.dates + 15);
        add(svg, 'text', { x: x + 4, y: o.dates + 12 }, text);
    });
    o.months.forEach(([x, text]) => {
        line(svg, 'frame', x + 0.5, o.dates + 15, x + 0.5, o.dates + 30);
        add(svg, 'text', { x: x + 4, y: o.dates + 27 }, text);
    });
    add(svg, 'rect', { class: 'frame', x: 0.5, y: o.top + 0.5, width: r - 1, height: o.bottom - o.top });
    [0, 15, 30].forEach(dy => line(svg, 'frame', 0, o.dates + dy + 0.5, r - 1, o.dates + dy + 0.5));
    line(svg, 'frame', 0.5, o.dates, 0.5, o.dates + 30);

    o.closes.forEach((close, i) => {
        const open = i ? o.closes[i - 1] : o.open;
        const x = Math.round(2 + i * o.step);
        const hi = Math.min(open, close), lo = Math.max(open, close);
        const [up, down] = o.wick[i] || wicks[i % 7];
        const fill = close < open ? '#fff' : '#000';
        line(svg, 'candle', x + 0.5, hi - up, x + 0.5, lo + down);
        add(svg, 'rect', { class: 'candle', x: x - 0.5, y: hi + 0.5, width: 2, height: Math.max(1, lo - hi), fill });
    });

    o.zones.forEach(([x, y, width, height]) => add(svg, 'rect', { class: 'zone', x, y, width, height }));
    add(svg, 'rect', { class: 'last-box', x: 589.5, y: o.last[0] - 6.5, width: o.boxWidth, height: 14 });
    add(svg, 'text', { class: 'last-text', x: 591, y: o.last[0] + 4 }, o.last[1]);
    o.levels.forEach(([y, text]) => {
        line(svg, 'level', 1, y, r - 1, y);
        add(svg, 'rect', { x: 591, y: y - 6, width: text.length * 6, height: 13, fill: '#f00' });
        add(svg, 'text', { class: 'level-text', x: 591, y: y + 5 }, text);
    });
    add(svg, 'line', { x1: 25, y1: o.dates - 9.5, x2: 40, y2: o.dates - 9.5, stroke: '#f00' });
    add(svg, 'text', { x: 50, y: o.dates - 5 }, o.name);
}

function range(from, to, step) {
    const list = [];
    for (let p = from; p >= to; p -= step) {
        list.push(Math.floor(p / 1000) + ' ' + String(p % 1000).padStart(3, '0'));
    }
    return list;
}

priceChart('siChart', {
    name: 'SiZ0 [Price]', top: 6, bottom: 364, dates: 386, first: 9, rowStep: 20.68, minor: 5, step: 3.055, open: 307, boxWidth: 37,
    prices: range(82000, 73500, 500),
    days: [[39, '4'], [88, '10'], [134, '16'], [179, '22'], [225, '28'], [274, '2'], [323, '8'], [372, '14'], [421, '20'], [470, '26'], [519, '30']],
    months: [[2, 'Sep'], [262, 'Oct'], [531, 'Nov']],
    levels: [[65, '80624'], [132, '79000'], [236, '76500'], [276, '75534']],
    last: [202, '77 326'],
    zones: [[470, 217, 11, 27]],
    wick: { 6: [12, 4], 8: [16, 4], 22: [14, 2], 35: [2, 13], 44: [1, 13], 55: [8, 3], 69: [3, 15], 77: [7, 1], 80: [12, 2], 155: [1, 15], 173: [23, 1], 175: [10, 3], 176: [9, 1], 183: [1, 6] },
    closes: [323, 327, 321, 326, 302, 293, 249, 247, 252, 264, 252, 253, 263, 256, 251, 247, 238, 225, 235, 234,
        219, 212, 214, 212, 220, 234, 245, 253, 243, 268, 262, 261, 272, 267, 274, 272, 252, 258, 260, 259,
        270, 273, 269, 273, 270, 273, 268, 261, 257, 260, 262, 268, 255, 247, 238, 213, 212, 222, 219, 235,
        230, 222, 192, 198, 185, 179, 172, 187, 183, 187, 153, 130, 140, 116, 117, 97, 102, 72, 115, 103,
        102, 127, 143, 163, 164, 173, 182, 170, 176, 131, 124, 143, 137, 136, 117, 143, 130, 132, 158, 148,
        133, 152, 150, 142, 150, 151, 172, 178, 179, 189, 196, 202, 204, 188, 194, 189, 188, 187, 190, 194,
        193, 187, 182, 168, 167, 147, 146, 141, 147, 158, 153, 158, 156, 160, 168, 172, 170, 160, 158, 182,
        183, 193, 197, 209, 193, 194, 208, 222, 213, 228, 219, 220, 235, 230, 221, 223, 226, 218, 218, 197,
        186, 168, 127, 126, 123, 98, 97, 115, 121, 117, 118, 102, 94, 60, 53, 56, 56, 87, 103, 115,
        105, 158, 179, 205, 203]
});

priceChart('riChart', {
    name: 'RIZ0 [Price]', top: 6, bottom: 372, dates: 394, first: 12, rowStep: 14.667, minor: 2, step: 3.86, open: 50, boxWidth: 43,
    prices: range(126000, 102000, 1000),
    days: [[10, '16'], [56, '21'], [102, '24'], [149, '29'], [195, '2'], [241, '7'], [287, '12'], [333, '15'], [379, '20'], [426, '23'], [472, '28'], [518, '2']],
    months: [[179, 'Oct'], [518, 'Nov']],
    levels: [[48, '123550'], [144, '117000'], [213, '112300'], [320, '105000']],
    last: [154, '116 370'],
    zones: [[-2, 35, 23, 19], [345, 192, 14, 32], [506, 301, 23, 45]],
    wick: { 2: [8, 4], 10: [9, 1], 14: [3, 2], 16: [2, 12], 38: [2, 18], 46: [17, 3], 63: [2, 16], 91: [2, 22], 98: [2, 10], 126: [26, 2], 128: [14, 4], 130: [2, 25], 134: [4, 28], 144: [10, 2], 145: [0, 0] },
    closes: [46, 44, 46, 56, 51, 48, 69, 69, 61, 59, 60, 68, 69, 90, 131, 139, 148, 139, 128, 119,
        133, 108, 96, 101, 124, 146, 164, 163, 143, 146, 151, 173, 175, 168, 171, 163, 169, 166, 198, 166,
        178, 179, 177, 170, 149, 149, 162, 148, 158, 165, 199, 198, 184, 176, 186, 184, 163, 163, 160, 143,
        143, 168, 170, 171, 188, 179, 178, 176, 168, 166, 178, 163, 159, 159, 156, 149, 153, 158, 151, 158,
        166, 171, 159, 159, 159, 168, 186, 198, 203, 198, 198, 197, 204, 205, 202, 203, 201, 206, 205, 196,
        184, 183, 189, 190, 188, 183, 181, 172, 170, 169, 158, 158, 156, 148, 170, 172, 184, 183, 190, 196,
        209, 213, 253, 278, 285, 290, 304, 297, 279, 273, 291, 287, 300, 302, 313, 298, 284, 285, 256, 248,
        238, 236, 183, 164, 152, 153]
});
```
